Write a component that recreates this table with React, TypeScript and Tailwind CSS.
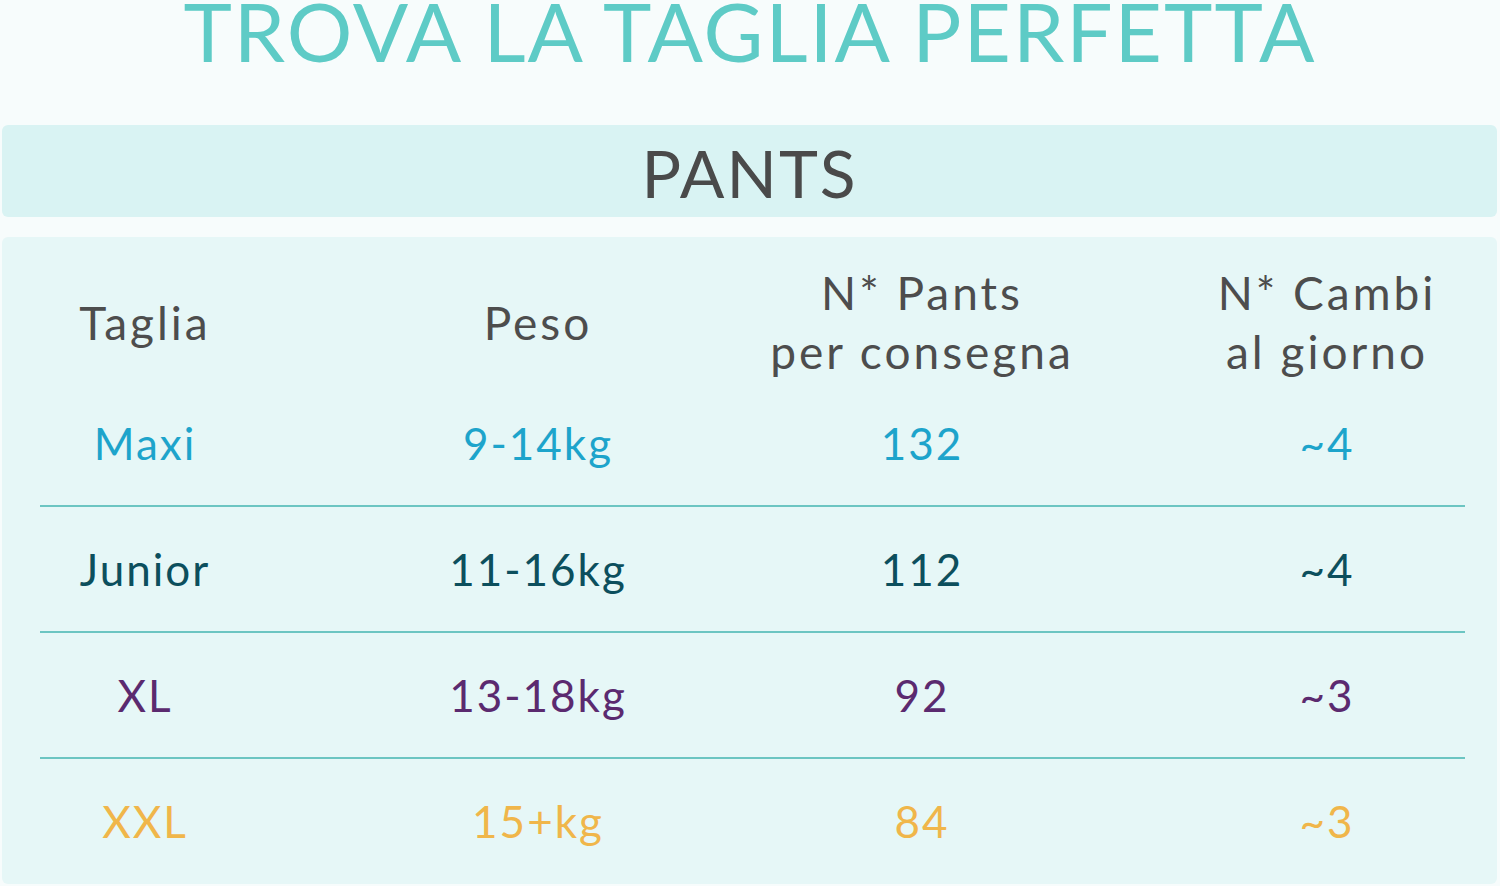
const cols = [
    "w-[210px]",
    "ml-[108px] w-[360px]",
    "ml-[22px] w-[364px]",
    "ml-[85px] w-[276px]",
];

interface Row {
    size: string;
    weight: string;
    count: string;
    changes: string;
    color: string;
}

const rows: Row[] = [
    { size: "Maxi", weight: "9-14kg", count: "132", changes: "~4", color: "text-[#1da4cb]" },
    { size: "Junior", weight: "11-16kg", count: "112", changes: "~4", color: "text-[#0c4f5d]" },
    { size: "XL", weight: "13-18kg", count: "92", changes: "~3", color: "text-[#5b2a6f]" },
    { size: "XXL", weight: "15+kg", count: "84", changes: "~3", color: "text-[#f0b64a]" },
];

export default function App() {
    const headers = [["Taglia"], ["Peso"], ["N* Pants", "per consegna"], ["N* Cambi", "al giorno"]];

    return (
        <div className="w-[1500px] h-[886px] overflow-hidden bg-[#f7fcfc] font-['Lato',sans-serif]">
            {/* title */}
            <div className="h-[125px]">
                <h1 className="text-center text-[82px] leading-[0.75] text-[#5ecbc6] tracking-[2px]">
                    TROVA LA TAGLIA PERFETTA
                </h1>
            </div>

            <div className="mx-[2px] mr-[3px] h-[92px] rounded-md bg-[#d9f3f3] flex items-center justify-center">
                <span className="text-[66px] leading-none text-[#4a4a4a] tracking-[2px] mt-[4px]">PANTS</span>
            </div>

            <div className="mt-[20px] mx-[2px] mr-[3px] h-[647px] rounded-md bg-[#e6f7f7] pl-[38px] pr-[32px] pt-[26px]">
                <div className="flex h-[118px] items-center text-[46px] leading-[59px] text-[#4d4d4d] tracking-[3px]">
                    {headers.map((lines, i) => (
                        <div key={i} className={`${cols[i]} text-center whitespace-nowrap`}>
                            {lines.map((l) => (
                                <div key={l}>{l}</div>
                            ))}
                        </div>
                    ))}
                </div>

                {rows.map((row, i) => (
                    <div key={row.size}>
                        {i > 0 && <div className="h-[2px] bg-[#6cc5c2]" />}
                        <div className={`flex h-[124px] items-center text-[44px] leading-none tracking-[2px] ${row.color}`}>
                            {[row.size, row.weight, row.count, row.changes].map((v, j) => (
                                <div key={j} className={`${cols[j]} text-center whitespace-nowrap`}>
                                    {v}
                                </div>
                            ))}
                        </div>
                    </div>
                ))}
            </div>
        </div>
    );
}
